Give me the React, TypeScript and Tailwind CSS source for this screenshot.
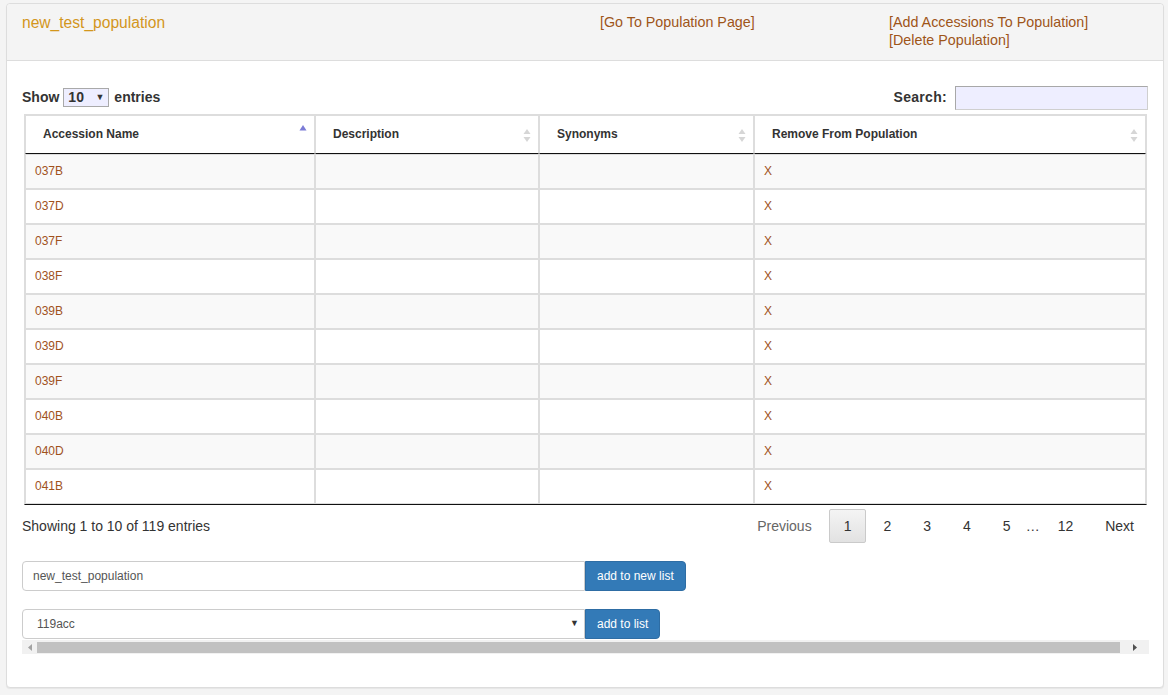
import React from "react";

const rows = ["037B", "037D", "037F", "038F", "039B", "039D", "039F", "040B", "040D", "041B"];

function SortBoth() {
  return (
    <svg width="8" height="15" viewBox="0 0 8 15" className="absolute right-[7px] top-[12px]">
      <path d="M4 1 L7.5 6 L0.5 6 Z" fill="#d6d6d6" />
      <path d="M4 14 L7.5 9 L0.5 9 Z" fill="#d6d6d6" />
    </svg>
  );
}

function SortAsc() {
  return (
    <svg width="8" height="14" viewBox="0 0 8 14" className="absolute right-[7px] top-[8px]">
      <path d="M4 1 L7.5 6.5 L0.5 6.5 Z" fill="#7b7bd6" />
    </svg>
  );
}

export default function App() {
  const font = { fontFamily: '"Liberation Sans", Arial, sans-serif' } as React.CSSProperties;
  return (
    <div className="min-h-[695px] bg-[#f4f4f4] pt-[3px] pl-[6px]" style={font}>
      <div className="w-[1158px] h-[685px] bg-white border border-[#dddddd] rounded-[4px] shadow-[0_1px_1px_rgba(0,0,0,0.06)]">
        {/* heading */}
        <div className="h-[57px] bg-[#f4f4f4] border-b border-[#dddddd] rounded-t-[4px] pl-[15px] pt-[8px] flex">
          <div className="w-[578px] text-[15.6px] leading-[20px] text-[#d3961c] pt-[1px]">new_test_population</div>
          <div className="w-[289px] text-[14.3px] leading-[18px] text-[#9e5519] pt-[1px]">[Go To Population Page]</div>
          <div className="text-[14.3px] leading-[18px] text-[#9e5519] pt-[1px]">
            <div>[Add Accessions To Population]</div>
            <div>[Delete Population]</div>
          </div>
        </div>
        {/* body */}
        <div className="px-[15px] pt-[21px]">
          <div className="flex justify-between items-center h-[31px] text-[#333] text-[14px] font-bold">
            <div className="flex items-center">
              <span>Show</span>
              <div className="ml-[4px] mr-[5px] w-[46px] h-[19px] bg-[#eeeeff] border border-[#a9a9a9] flex items-center justify-between pl-[4px] pr-[4px]">
                <span className="leading-[17px]">10</span>
                <span className="text-[9px] leading-[17px]">▼</span>
              </div>
              <span>entries</span>
            </div>
            <div className="flex items-center">
              <span className="tracking-[0.3px]">Search:</span>
              <div className="ml-[8px] w-[193px] h-[24px] bg-[#eeeeff] border border-[#cfcfcf] border-t-[#a8a8a8] border-l-[#a8a8a8]"></div>
            </div>
          </div>
          <table className="ml-[2px] mt-[1px] w-[1123px] table-fixed border-separate border-spacing-0 border border-[#dddddd] border-b-[#111111] text-[12px] text-[#333]">
            <colgroup>
              <col className="w-[290px]" />
              <col className="w-[224px]" />
              <col className="w-[215px]" />
              <col className="w-[392px]" />
            </colgroup>
            <thead>
              <tr>
                {["Accession Name", "Description", "Synonyms", "Remove From Population"].map((h, i) => (
                  <th
                    key={h}
                    className="relative text-left font-bold pl-[17px] pt-[9px] pb-[10px] leading-[18px] border border-[#dddddd] border-b-[#111111]"
                  >
                    {h}
                    {i === 0 ? <SortAsc /> : <SortBoth />}
                  </th>
                ))}
              </tr>
            </thead>
            <tbody>
              {rows.map((r, i) => (
                <tr key={r} className={i % 2 === 0 ? "bg-[#f9f9f9]" : "bg-white"}>
                  <td className="border border-[#dddddd] pl-[9px] py-[8px] leading-[17px] text-[#a0521c]">{r}</td>
                  <td className="border border-[#dddddd] py-[8px] leading-[17px]"></td>
                  <td className="border border-[#dddddd] py-[8px] leading-[17px]"></td>
                  <td className="border border-[#dddddd] pl-[9px] py-[8px] leading-[17px] text-[#a0521c]">X</td>
                </tr>
              ))}
            </tbody>
          </table>
          <div className="flex justify-between items-center mt-[4px] text-[14px]">
            <div className="text-[#333]">Showing 1 to 10 of 119 entries</div>
            <div className="flex items-center mr-[-1px]">
              <span className="ml-[2px] px-[14px] py-[7px] leading-[18px] border border-transparent text-[#666]">Previous</span>
              <span className="ml-[2px] px-[14px] py-[7px] leading-[18px] border border-[#cacaca] bg-gradient-to-b from-[#f4f4f4] to-[#e2e2e2] text-[#333] rounded-[2px]">1</span>
              <span className="ml-[2px] px-[14px] py-[7px] leading-[18px] border border-transparent text-[#333]">2</span>
              <span className="ml-[2px] px-[14px] py-[7px] leading-[18px] border border-transparent text-[#333]">3</span>
              <span className="ml-[2px] px-[14px] py-[7px] leading-[18px] border border-transparent text-[#333]">4</span>
              <span className="ml-[2px] px-[14px] py-[7px] leading-[18px] border border-transparent text-[#333]">5</span>
              <span className="leading-[18px] text-[#333] w-[15px]">…</span>
              <span className="ml-[2px] px-[14px] py-[7px] leading-[18px] border border-transparent text-[#333]">12</span>
              <span className="ml-[2px] px-[14px] py-[7px] leading-[18px] border border-transparent text-[#333]">Next</span>
            </div>
          </div>
          <div className="mt-[18px] flex">
            <div className="w-[563px] h-[30px] border border-[#cccccc] rounded-l-[4px] pl-[10px] flex items-center text-[12px] text-[#555]">
              new_test_population
            </div>
            <div className="h-[30px] px-[11px] bg-[#337ab7] border border-[#2e6da4] rounded-r-[4px] flex items-center text-[12px] text-white">
              add to new list
            </div>
          </div>
          <div className="mt-[18px] flex">
            <div className="w-[563px] h-[30px] border border-[#cccccc] rounded-l-[4px] pl-[14px] pr-[5px] flex items-center justify-between text-[12px] text-[#555]">
              <span>119acc</span>
              <span className="text-[9px] text-[#333]">▼</span>
            </div>
            <div className="h-[30px] px-[11px] bg-[#337ab7] border border-[#2e6da4] rounded-r-[4px] flex items-center text-[12px] text-white">
              add to list
            </div>
          </div>
          <div className="w-[1127px] h-[14px] bg-[#f1f1f1] flex items-center mt-[1px]">
            <div className="w-[15px] flex justify-center">
              <svg width="4" height="7" viewBox="0 0 4 7"><path d="M4 0 L0 3.5 L4 7 Z" fill="#a3a3a3" /></svg>
            </div>
            <div className="w-[1083px] h-[11px] bg-[#c1c1c1]"></div>
            <div className="flex-1 flex justify-center">
              <svg width="4" height="7" viewBox="0 0 4 7"><path d="M0 0 L4 3.5 L0 7 Z" fill="#505050" /></svg>
            </div>
          </div>
        </div>
      </div>
    </div>
  );
}
